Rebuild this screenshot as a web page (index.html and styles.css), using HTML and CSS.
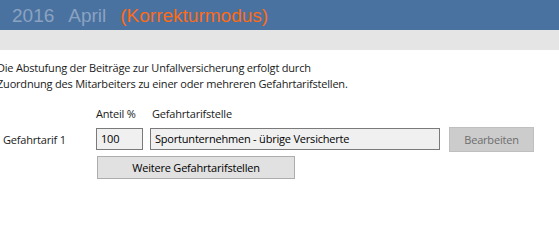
FILE: index.html
```html
<!DOCTYPE html>
<html lang="de">
<head>
<meta charset="utf-8">
<title>Gefahrtarif</title>
<link rel="stylesheet" href="styles.css">
</head>
<body>
<header class="topbar">
  <span class="period">2016</span>
  <span class="period">April</span>
  <span class="mode">(Korrekturmodus)</span>
</header>
<div class="subbar"></div>
<main class="content">
  <p class="intro">Die Abstufung der Beiträge zur Unfallversicherung erfolgt durch<br>Zuordnung des Mitarbeiters zu einer oder mehreren Gefahrtarifstellen.</p>
  <div class="form">
    <span class="col-head head-share">Anteil %</span>
    <span class="col-head head-place">Gefahrtarifstelle</span>
    <span class="row-label">Gefahrtarif 1</span>
    <div class="field field-share">100</div>
    <div class="field field-place">Sportunternehmen - übrige Versicherte</div>
    <button class="btn btn-disabled" type="button">Bearbeiten</button>
    <button class="btn btn-more" type="button">Weitere Gefahrtarifstellen</button>
  </div>
</main>
</body>
</html>
```
FILE: styles.css
```css
html, body {
  margin: 0;
  padding: 0;
  background: #ffffff;
}
body {
  width: 559px;
  height: 227px;
  overflow: hidden;
  font-family: "Open Sans", "Noto Sans", sans-serif;
  font-size: 11px;
  letter-spacing: -0.2px;
  color: #1a1a1a;
}
.topbar {
  height: 30px;
  background: #4a72a0;
  display: flex;
  align-items: center;
  gap: 14px;
  padding-left: 12px;
  font-family: "Liberation Sans", Arial, sans-serif;
  font-size: 19px;
  letter-spacing: 0;
  line-height: 30px;
  padding-top: 1px;
  box-sizing: border-box;
}
.period {
  color: #8ba2c0;
}
.mode {
  color: #ff6a13;
}
.subbar {
  height: 20px;
  background: #e5e5e5;
}
.content {
  padding-top: 10px;
}
.intro {
  margin: 0 0 0 -3px;
  line-height: 16px;
}
.form {
  display: grid;
  grid-template-columns: 96px 54px 299px 85px;
  grid-template-rows: 16px 24px 23px;
  row-gap: 5px;
  margin-top: 14px;
  align-items: center;
}
.col-head {
  grid-row: 1;
  line-height: 16px;
}
.head-share { grid-column: 2; }
.head-place { grid-column: 3; margin-left: 2px; }
.row-label {
  grid-row: 2;
  grid-column: 1;
  padding-left: 3px;
}
.field {
  grid-row: 2;
  height: 22px;
  box-sizing: border-box;
  border: 1px solid #7a7a7a;
  background: #f0f0f0;
  padding-left: 4px;
  line-height: 20px;
  color: #000;
}
.field-share { grid-column: 2; width: 47px; }
.field-place { grid-column: 3; width: 290px; }
.btn {
  font-family: inherit;
  font-size: inherit;
  letter-spacing: inherit;
  box-sizing: border-box;
  border-radius: 0;
  padding: 0;
  margin: 0;
}
.btn-disabled {
  grid-row: 2;
  grid-column: 4;
  width: 85px;
  height: 25px;
  background: #cccccc;
  border: 1px solid #bfbfbf;
  color: #6d6d6d;
}
.btn-more {
  grid-row: 3;
  grid-column: 2 / 4;
  align-self: end;
  margin-top: -1px;
  margin-left: 1px;
  width: 198px;
  height: 23px;
  background: #e1e1e1;
  border: 1px solid #adadad;
  color: #000;
}
```
